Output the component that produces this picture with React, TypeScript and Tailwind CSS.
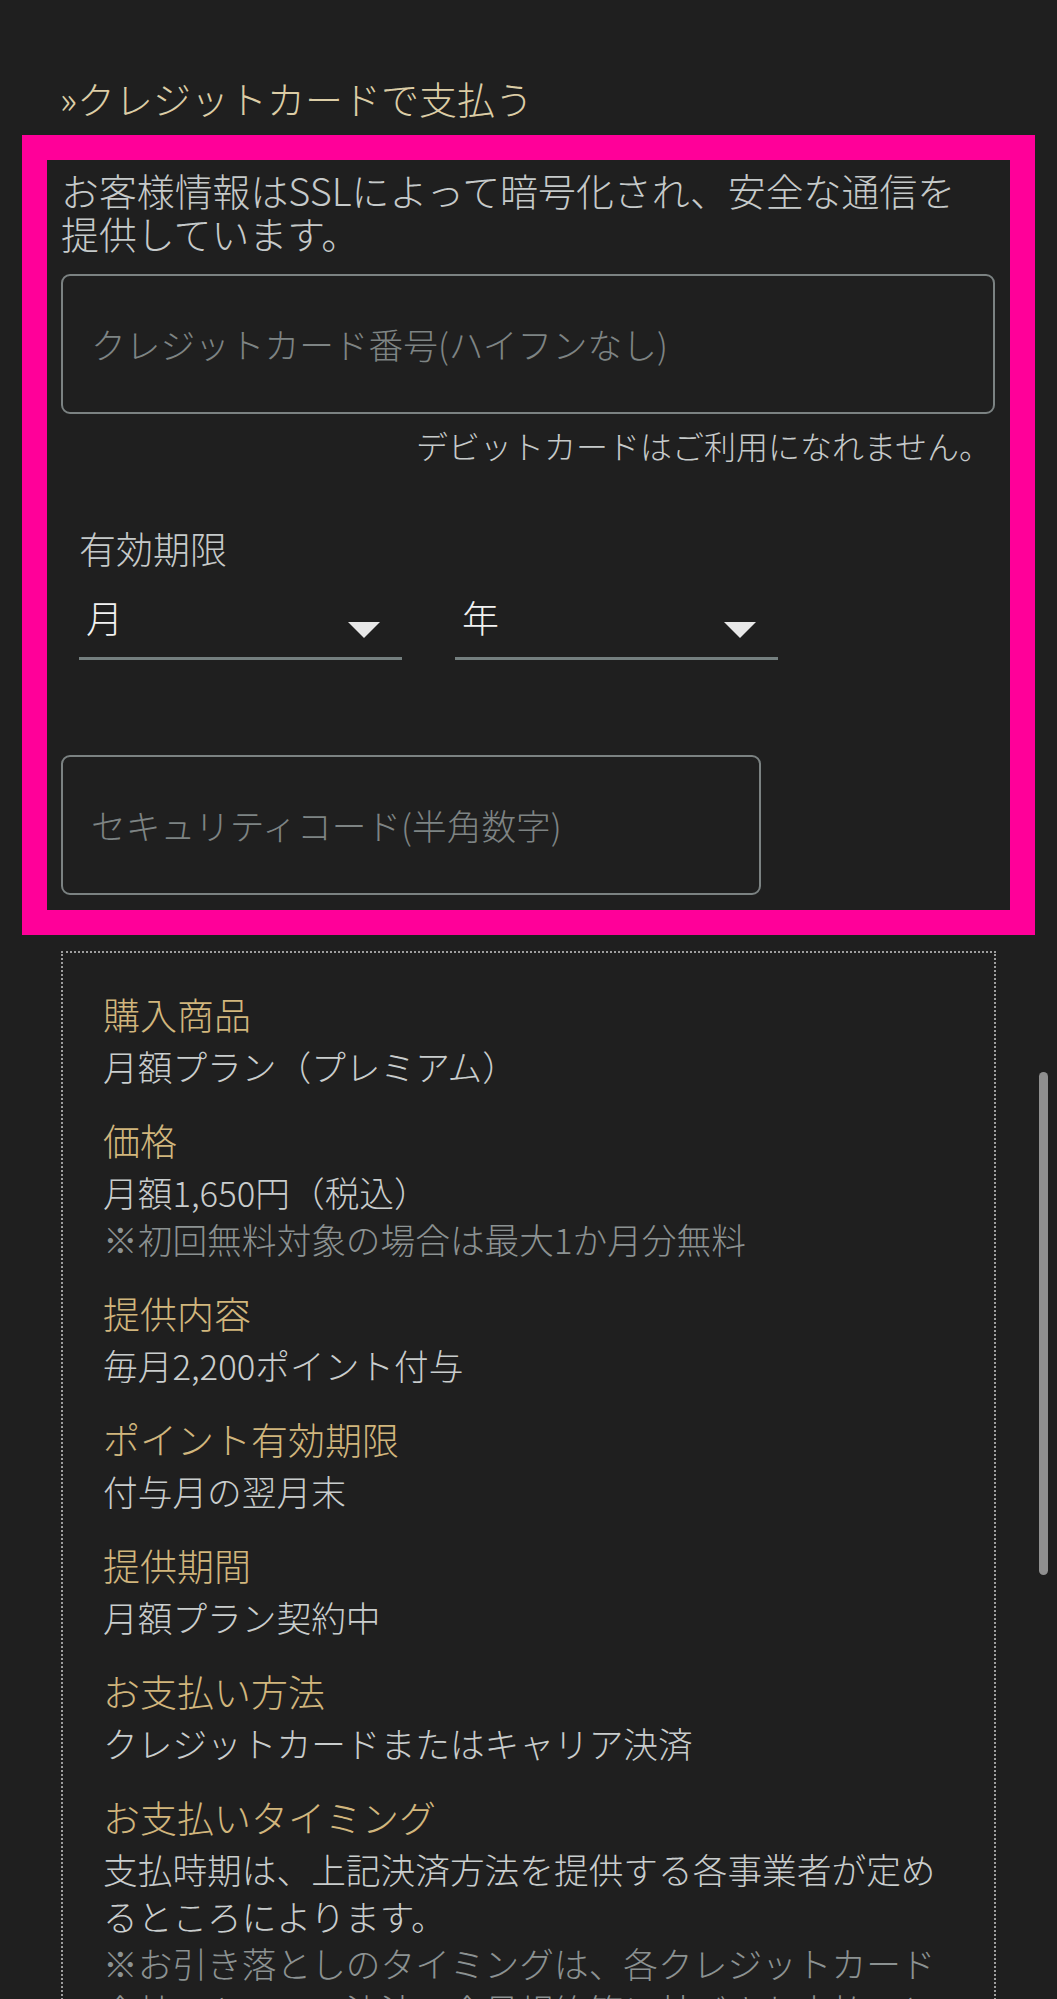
const details = [
    { label: "購入商品", lines: [{ text: "月額プラン（プレミアム）" }] },
    {
        label: "価格",
        lines: [{ text: "月額1,650円（税込）" }, { text: "※初回無料対象の場合は最大1か月分無料", note: true }],
    },
    { label: "提供内容", lines: [{ text: "毎月2,200ポイント付与" }] },
    { label: "ポイント有効期限", lines: [{ text: "付与月の翌月末" }] },
    { label: "提供期間", lines: [{ text: "月額プラン契約中" }] },
    { label: "お支払い方法", lines: [{ text: "クレジットカードまたはキャリア決済" }] },
    {
        label: "お支払いタイミング",
        lines: [
            { text: "支払時期は、上記決済方法を提供する各事業者が定めるところによります。" },
            {
                text: "※お引き落としのタイミングは、各クレジットカード会社・キャリア決済の会員規約等に基づきお支払いとなります。",
                note: true,
            },
        ],
    },
];

function SelectBox({ label }: { label: string }) {
    return (
        <div className="flex w-[323px] items-end justify-between border-b-[3px] border-[#747f7f] pb-[18px] pl-[7px] pr-[22px]">
            <span className="text-[37px] leading-[44px] text-[#f2f2f2]">{label}</span>
            <svg width="32" height="16" viewBox="0 0 32 16" className="mb-[1px]">
                <path d="M0 0H32L16 16Z" fill="#e8e8e8" />
            </svg>
        </div>
    );
}

function App() {
    return (
        <div className="relative h-[1999px] overflow-hidden bg-[#1f1f1f] pt-[74px] font-['Noto_Sans_CJK_JP','Noto_Sans',sans-serif] font-light">
            <h2 className="px-[60px] text-[38px] leading-[48px] font-light text-[#dccda6]">
                »クレジットカードで支払う
            </h2>

            <section className="mx-[22px] mt-[13px] border-[25px] border-[#ff0099] pb-[15px] pl-[14px] pr-[15px] pt-[8px]">
                <p className="text-[37.9px] leading-[43px] text-[#c6caca]">
                    お客様情報はSSLによって暗号化され、安全な通信を
                    <br />
                    提供しています。
                </p>

                <input
                    type="text"
                    placeholder="クレジットカード番号(ハイフンなし)"
                    className="mt-[20px] block h-[140px] w-full rounded-[9px] border-2 border-[#7b8282] bg-transparent px-[28px] text-[34.7px] font-light text-[#e0e0e0] outline-none placeholder:text-[#7e8484]"
                />
                <p className="mt-[11px] pr-[4px] text-right text-[32px] leading-[40px] text-[#c6caca]">
                    デビットカードはご利用になれません。
                </p>

                <div className="mt-[61px] pl-[18px]">
                    <p className="text-[37px] leading-[44px] text-[#c6caca]">有効期限</p>
                    <div className="mt-[25px] flex gap-[53px]">
                        <SelectBox label="月" />
                        <SelectBox label="年" />
                    </div>
                </div>

                <input
                    type="text"
                    placeholder="セキュリティコード(半角数字)"
                    className="mt-[95px] block h-[140px] w-[700px] rounded-[9px] border-2 border-[#7b8282] bg-transparent px-[28px] text-[34.7px] font-light text-[#e0e0e0] outline-none placeholder:text-[#7e8484]"
                />
            </section>

            <div className="mx-[61px] mt-[16px] border-2 border-dotted border-[#9e9e9e] pb-[40px] pl-[40px] pr-[40px] pt-[37px]">
                <dl className="flex flex-col gap-[26px]">
                    {details.map((item) => (
                        <div key={item.label}>
                            <dt className="mb-[5px] text-[37px] leading-[48px] text-[#d1b67d]">{item.label}</dt>
                            {item.lines.map((line) => (
                                <dd
                                    key={line.text}
                                    className={
                                        line.note
                                            ? "text-[34.7px] leading-[47px] text-[#8c9292]"
                                            : "text-[34.7px] leading-[47px] text-[#c9cdcd]"
                                    }
                                >
                                    {line.text}
                                </dd>
                            ))}
                        </div>
                    ))}
                </dl>
            </div>

            {/* scroll indicator */}
            <div className="absolute left-[1039px] top-[1072px] h-[503px] w-[9px] rounded-full bg-[#8f8f8f]" />
        </div>
    );
}

export default App;
